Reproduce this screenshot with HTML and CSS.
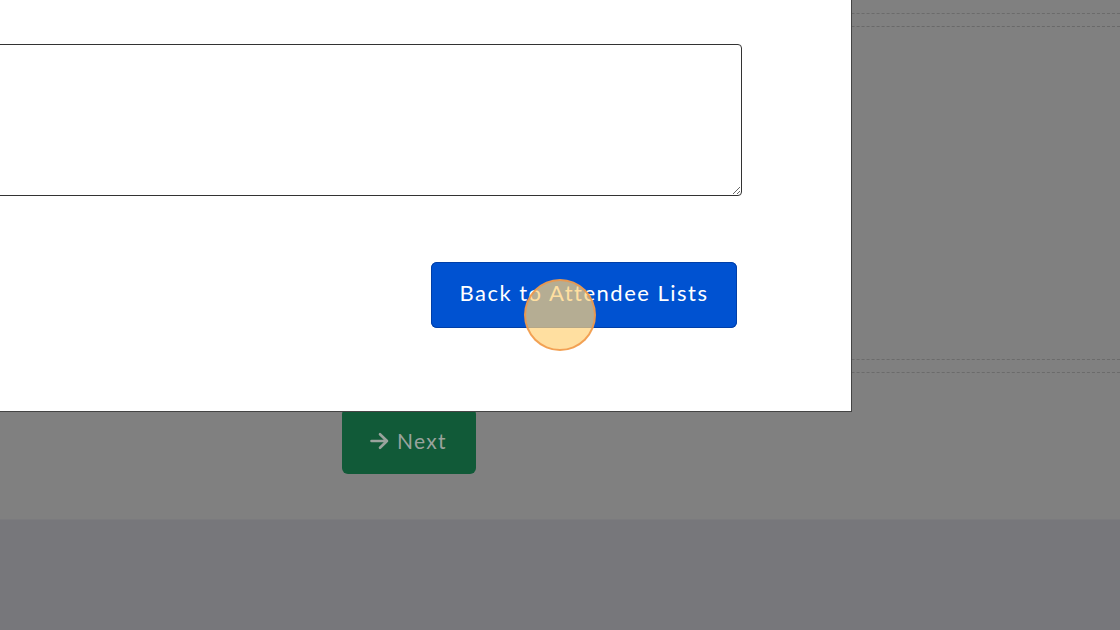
FILE: index.html
```html
<!DOCTYPE html>
<html lang="en">
<head>
<meta charset="utf-8">
<title>Attendee notes</title>
<link rel="stylesheet" href="styles.css">
</head>
<body>
<div class="page">
  <main class="content">
    <div class="rule rule-first"></div>
    <section class="panel"></section>
    <div class="rule rule-last"></div>
    <div class="actions">
      <button class="btn-next" type="button">
        <svg class="arrow" width="19" height="18" viewBox="0 0 19 18" aria-hidden="true"><path d="M1.5 9H17M10 2.2L17 9L10 15.8" fill="none" stroke="currentColor" stroke-width="2.6" stroke-linecap="round" stroke-linejoin="round"/></svg>
        <span>Next</span>
      </button>
    </div>
  </main>
  <footer class="footer"></footer>
</div>

<div class="modal" role="dialog">
  <div class="modal-body">
    <textarea class="notes" aria-label="Notes"></textarea>
    <div class="modal-actions">
      <button class="btn-back" type="button">Back to Attendee Lists</button>
    </div>
  </div>
</div>

<div class="click-ring"></div>
</body>
</html>
```

FILE: styles.css
```css
* { box-sizing: border-box; }

html, body {
  margin: 0;
  padding: 0;
  width: 1120px;
  height: 630px;
  overflow: hidden;
  font-family: "Lato", "Open Sans", "Liberation Sans", sans-serif;
}

.page {
  display: flex;
  flex-direction: column;
  height: 630px;
}

.content {
  height: 519px;
  background: #808080;
  display: flex;
  flex-direction: column;
}

.rule {
  height: 0;
  border-top: 1px dashed #6b6b6b;
}

.rule-first { margin-top: 13px; }

.panel {
  margin-top: 12px;
  height: 334px;
  border-top: 1px dashed #696969;
  border-bottom: 1px dashed #6b6b6b;
}

.rule-last { margin-top: 12px; }

.actions {
  margin-top: 35px;
  padding-left: 342px;
}

.btn-next {
  display: flex;
  align-items: center;
  gap: 8px;
  width: 134px;
  height: 66px;
  padding: 0 0 2px 28px;
  border: none;
  border-radius: 6px;
  background: #115a38;
  color: #9aa39d;
  font-family: inherit;
  font-size: 21px;
  letter-spacing: 1.3px;
}

.arrow { margin-top: 1px; }

.footer {
  flex: 1;
  background: #77777b;
  border-top: 1px solid #7b7b7e;
}

.modal {
  position: absolute;
  left: -200px;
  top: -100px;
  width: 1052px;
  height: 512px;
  background: #ffffff;
  border-right: 1px solid #444;
  border-bottom: 1px solid #444;
}

.modal-body {
  display: flex;
  flex-direction: column;
  padding: 144px 109px 0 0;
}

.notes {
  display: block;
  width: 100%;
  height: 152px;
  margin: 0;
  border: 1px solid #333;
  border-radius: 4px;
  background: #fff;
  resize: vertical;
}

.modal-actions {
  display: flex;
  justify-content: flex-end;
  margin-top: 66px;
  padding-right: 5px;
}

.btn-back {
  width: 306px;
  height: 66px;
  padding: 0 0 5px;
  border: none;
  border-radius: 6px;
  background: #0052d1;
  color: #ffffff;
  font-family: inherit;
  font-size: 22px;
  letter-spacing: 1.5px;
  box-shadow: 0 0 0 1px #003fa8 inset;
}

.click-ring {
  position: absolute;
  left: 524px;
  top: 279px;
  width: 72px;
  height: 72px;
  border-radius: 50%;
  background: rgba(255, 210, 121, 0.71);
  border: 2px solid rgba(240, 150, 70, 0.85);
}
```
